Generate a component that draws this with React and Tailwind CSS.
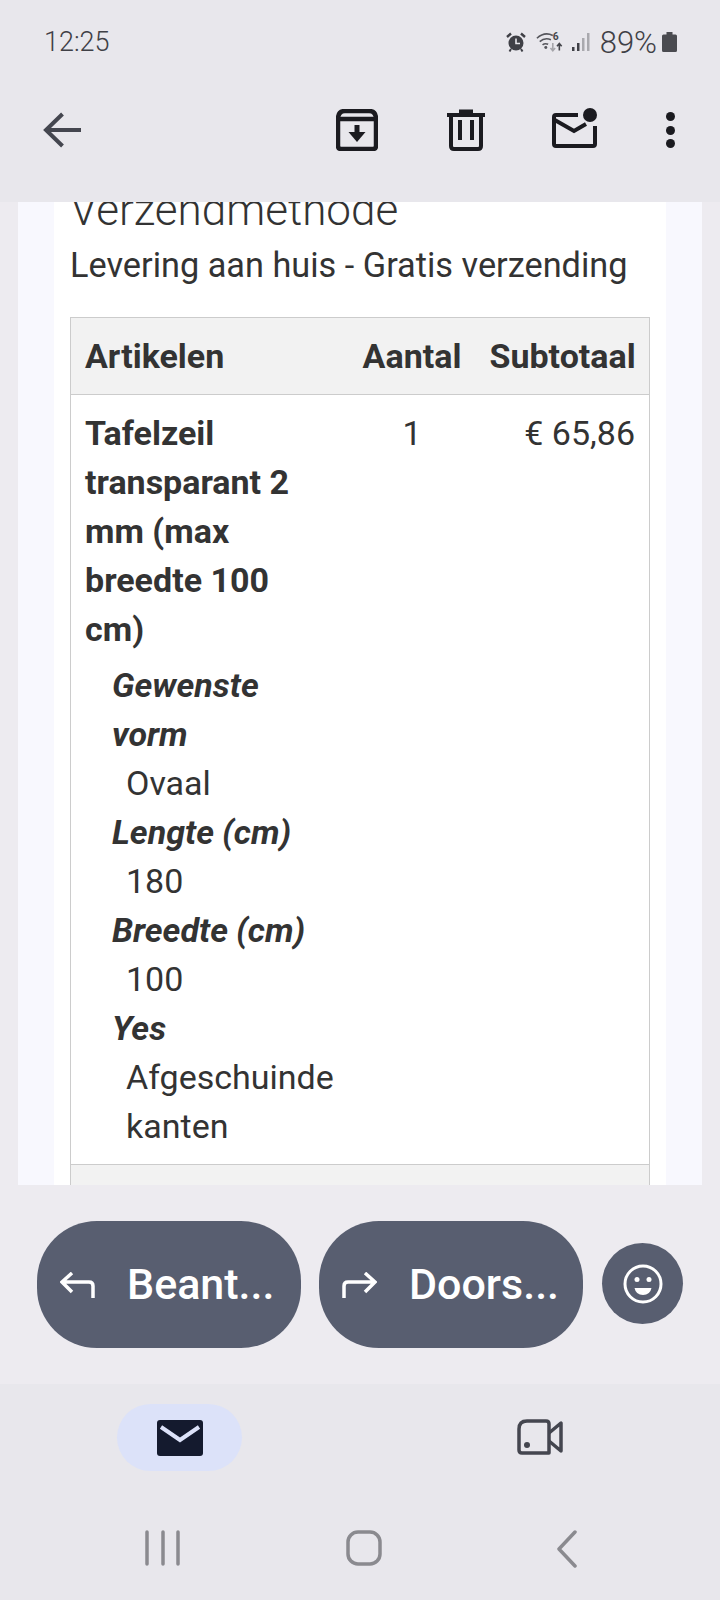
import React from "react";

const options = [
  { label: ["Gewenste", "vorm"], value: ["Ovaal"] },
  { label: ["Lengte (cm)"], value: ["180"] },
  { label: ["Breedte (cm)"], value: ["100"] },
  { label: ["Yes"], value: ["Afgeschuinde", "kanten"] },
];

function StatusIcons() {
  return (
    <div className="flex items-center">
      {/* alarm */}
      <svg width="20" height="20" viewBox="0 0 20 20" className="mr-[10px]">
        <circle cx="10" cy="11" r="7.5" fill="#3f4046" />
        <path d="M10 6.5V11.5H14" stroke="#e8e7ec" strokeWidth="1.6" fill="none" />
        <path d="M1 5L5 1.5M19 5L15 1.5" stroke="#3f4046" strokeWidth="2.4" />
        <path d="M5 17L3.5 19.5M15 17L16.5 19.5" stroke="#3f4046" strokeWidth="2" />
      </svg>
      {/* wifi + data */}
      <svg width="28" height="22" viewBox="0 0 30 22" className="mr-[7px]">
        <path d="M1 7C7 1.5 13 1.5 18 4M4 10.5C8 7 12 7 16 8.5M7 14C9 12.5 11 12.5 13 13.5" stroke="#55565c" strokeWidth="1.7" fill="none" />
        <circle cx="10.5" cy="17" r="1.6" fill="#55565c" />
        <text x="18" y="9" fontSize="11" fontWeight="700" fontFamily="Roboto, sans-serif" fill="#44454b">6</text>
        <path d="M18 12V20M15.5 17.5L18 20.5L20.5 17.5" stroke="#a5a5aa" strokeWidth="1.7" fill="none" />
        <path d="M25 20V13M22.5 15.5L25 12.5L27.5 15.5" stroke="#44454b" strokeWidth="1.7" fill="none" />
      </svg>
      {/* signal */}
      <svg width="20" height="20" viewBox="0 0 20 20" className="mr-[9px]">
        <rect x="1" y="15" width="2.5" height="4" fill="#3f4046" />
        <rect x="6" y="11" width="2.5" height="8" fill="#3f4046" />
        <rect x="11" y="6" width="2.5" height="13" fill="#a9a9ae" />
        <rect x="16" y="1" width="2.5" height="18" fill="#a9a9ae" />
      </svg>
      <span className="text-[31px] leading-none font-light text-[#3f4046] mr-[5px]">89%</span>
      {/* battery */}
      <svg width="15" height="20" viewBox="0 0 15 20">
        <path d="M4.5 0H10.5V2.5H13.5Q15 2.5 15 4V18.5Q15 20 13.5 20H1.5Q0 20 0 18.5V4Q0 2.5 1.5 2.5H4.5Z" fill="#4a4b50" />
      </svg>
    </div>
  );
}

function Toolbar() {
  return (
    <div className="flex items-center h-[52px] mt-[48px] pl-[43px]">
      <svg width="38" height="36" viewBox="0 0 38 36" fill="none" stroke="#44464f" strokeWidth="4">
        <path d="M38 18H4M19.500 2L3 18L19.500 34" />
      </svg>
      <div className="flex-1" />
      {/* archive */}
      <svg width="42" height="42" viewBox="0 0 42 42" className="mr-[69px]" fill="none" stroke="#1b1b20" strokeWidth="4.500">
        <path d="M2 10Q2 2 9 2H33Q40 2 40 10V37Q40 40 37 40H5Q2 40 2 37Z" strokeLinejoin="round" />
        <path d="M2 10H40" />
        <path d="M21 16V26" strokeWidth="5" />
        <path d="M12.500 23H29.500L21 33Z" fill="#1b1b20" stroke="none" />
      </svg>
      {/* trash */}
      <svg width="38" height="42" viewBox="0 0 38 42" className="mr-[67px]" fill="none" stroke="#1b1b20" strokeWidth="4">
        <path d="M0 6H38" />
        <path d="M12 3H26" strokeWidth="5" />
        <path d="M4 7V37Q4 40 7 40H31Q34 40 34 37V7" />
        <path d="M13 11V31M25 11V31" />
      </svg>
      {/* mail with dot */}
      <svg width="46" height="44" viewBox="0 0 46 44" className="mr-[68px]" fill="none" stroke="#1b1b20" strokeWidth="4">
        <path d="M26 7H4Q2 7 2 9V36Q2 38 4 38H41Q43 38 43 36V18" />
        <path d="M1 11L22 23L34 16" />
        <circle cx="38" cy="7" r="7" fill="#1b1b20" stroke="none" />
      </svg>
      {/* more */}
      <div className="flex flex-col gap-[4.500px] mr-[45px]">
        <span className="w-[9px] h-[9px] rounded-full bg-[#1b1b20]" />
        <span className="w-[9px] h-[9px] rounded-full bg-[#1b1b20]" />
        <span className="w-[9px] h-[9px] rounded-full bg-[#1b1b20]" />
      </div>
    </div>
  );
}

function OrderTable() {
  return (
    <table className="w-[579px] table-fixed border-collapse border border-[#cccccc] text-[34px] leading-[49px] text-[#333333]">
      <colgroup>
        <col className="w-[278px]" />
        <col className="w-[127px]" />
        <col className="w-[174px]" />
      </colgroup>
      <thead>
        <tr className="bg-[#f2f2f2] h-[77px] border-b border-[#cccccc]">
          <th className="px-[14px] text-left font-bold">Artikelen</th>
          <th className="text-center font-bold whitespace-nowrap">Aantal</th>
          <th className="px-[14px] text-right font-bold whitespace-nowrap">Subtotaal</th>
        </tr>
      </thead>
      <tbody>
        <tr className="border-b border-[#cccccc]">
          <td className="pl-[14px] pt-[14px] pb-[13px] align-top">
            <div className="font-bold mb-[7px]">
              Tafelzeil
              <br />
              transparant 2
              <br />
              mm (max
              <br />
              breedte 100
              <br />
              cm)
            </div>
            <dl className="pl-[27px]">
              {options.map((opt) => (
                <div key={opt.label[0]}>
                  <dt className="font-bold italic">
                    {opt.label.map((l) => (
                      <div key={l}>{l}</div>
                    ))}
                  </dt>
                  <dd className="pl-[14px]">
                    {opt.value.map((v) => (
                      <div key={v}>{v}</div>
                    ))}
                  </dd>
                </div>
              ))}
            </dl>
          </td>
          <td className="pt-[14px] align-top text-center">1</td>
          <td className="px-[14px] pt-[14px] align-top text-right whitespace-nowrap">€ 65,86</td>
        </tr>
        <tr className="bg-[#f2f2f2]">
          <td colSpan={3} className="h-[60px]" />
        </tr>
      </tbody>
    </table>
  );
}

function ActionPill({ icon, label, className }) {
  return (
    <div className={`h-[127px] w-[264px] rounded-[60px] bg-[#585e70] flex items-center text-white ${className}`}>
      {icon}
      <span className="text-[43px] leading-none font-medium">{label}</span>
    </div>
  );
}

export default function App() {
  return (
    <div className="w-[720px] h-[1600px] flex flex-col bg-[#e8e7ec] overflow-hidden font-['Roboto',sans-serif]">
      {/* Status bar + toolbar */}
      <div className="h-[202px] shrink-0 pt-[28px]">
        <div className="flex items-center justify-between h-[28px] pl-[44px] pr-[43px]">
          <span className="text-[27px] leading-none font-light text-[#3f4046]">12:25</span>
          <StatusIcons />
        </div>
        <Toolbar />
      </div>

      {/* Mail body, scrolled */}
      <div className="h-[983px] shrink-0 overflow-hidden bg-[#edebf0] px-[18px]">
        <div className="bg-[#f8f8fe] px-[36px] h-full">
          <div className="flow-root bg-white h-full px-[16px]">
            <div className="-mt-[16px] text-[44px] leading-[49px] font-light text-[#333333] h-[49px]">Verzendmethode</div>
            <div className="text-[34.300px] leading-[49px] text-[#333333] mb-[27px] mt-[6px] whitespace-nowrap">Levering aan huis - Gratis verzending</div>
            <OrderTable />
          </div>
        </div>
      </div>

      {/* Reply actions */}
      <div className="h-[199px] shrink-0 bg-[#edebf0] flex pl-[37px] pt-[36px]">
        <ActionPill
          className="pl-[23px] gap-[32px]"
          label="Beant..."
          icon={
            <svg width="35" height="26" viewBox="0 0 35 26" fill="none" stroke="white" strokeWidth="3.500">
              <path d="M33 26V14Q33 10 29 10H3M12 1L2 10L12 20" />
            </svg>
          }
        />
        <ActionPill
          className="ml-[18px] pl-[23px] gap-[32px]"
          label="Doors..."
          icon={
            <svg width="35" height="26" viewBox="0 0 35 26" fill="none" stroke="white" strokeWidth="3.500">
              <path d="M2 26V14Q2 10 6 10H32M23 1L33 10L23 20" />
            </svg>
          }
        />
        <div className="ml-[19px] mt-[22px] w-[81px] h-[81px] rounded-full bg-[#585e70] flex items-center justify-center">
          <svg width="40" height="40" viewBox="0 0 40 40" fill="none">
            <circle cx="20" cy="20" r="18" stroke="white" strokeWidth="3" />
            <circle cx="14" cy="15.500" r="2.500" fill="white" />
            <circle cx="26" cy="15.500" r="2.500" fill="white" />
            <path d="M11.500 24H28.500Q27 31 20 31Q13 31 11.500 24Z" fill="white" />
          </svg>
        </div>
      </div>

      {/* Bottom tabs */}
      <div className="flex h-[107px] pt-[20px] shrink-0">
        <div className="ml-[117px] w-[125px] h-[67px] rounded-[34px] bg-[#dce2f9] flex items-center justify-center">
          <svg width="46" height="36" viewBox="0 0 46 36">
            <rect width="46" height="36" rx="3" fill="#141a2e" />
            <path d="M4 7L23 20L42 7" stroke="#dce2f9" strokeWidth="4" fill="none" />
          </svg>
        </div>
        <svg width="46" height="36" viewBox="0 0 46 36" className="ml-[275px] mt-[15px]" fill="none" stroke="#44464f" strokeWidth="3.500">
          <path d="M10 2H29Q32 2 32 5V34H5Q2 34 2 31V10Q2 2 10 2Z" strokeLinejoin="round" />
          <path d="M32 14L44 4V32L32 22" strokeLinejoin="round" />
          <circle cx="10" cy="26" r="3" fill="#44464f" stroke="none" />
        </svg>
      </div>

      {/* System navigation */}
      <div className="relative flex-1">
        <div className="flex items-start pt-[39px]">
          <svg width="36" height="36" viewBox="0 0 36 36" className="ml-[145px]" stroke="#8a8a8f" strokeWidth="3.500" strokeLinecap="round">
            <path d="M2 2V34M18 2V34M33 2V34" />
          </svg>
          <svg width="36" height="36" viewBox="0 0 36 36" className="ml-[165px]" fill="none" stroke="#8a8a8f" strokeWidth="3.500">
            <rect x="2" y="2" width="32" height="32" rx="10" />
          </svg>
          <svg width="22" height="38" viewBox="0 0 22 38" className="ml-[174px]" fill="none" stroke="#8a8a8f" strokeWidth="3.500" strokeLinecap="round" strokeLinejoin="round">
            <path d="M19 2L3 19L19 36" />
          </svg>
        </div>
      </div>
    </div>
  );
}
